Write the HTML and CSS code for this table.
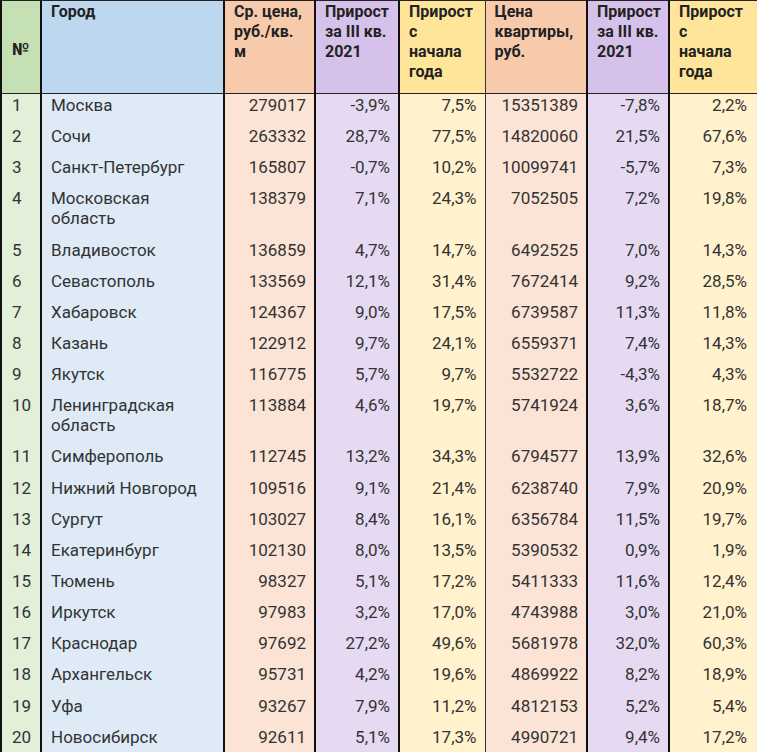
FILE: index.html
```html
<!DOCTYPE html>
<html lang="ru">
<head>
<meta charset="utf-8">
<link rel="stylesheet" href="styles.css">
</head>
<body>
<table class="t">
  <colgroup>
    <col class="c-n"><col class="c-city"><col class="c-p1"><col class="c-g1"><col class="c-y1"><col class="c-p2"><col class="c-g2"><col class="c-y2">
  </colgroup>
  <thead>
    <tr>
      <th class="g num-h">№</th>
      <th class="b">Город</th>
      <th class="o bl">Ср. цена, руб./кв. м</th>
      <th class="v bl">Прирост за III кв. 2021</th>
      <th class="y bl">Прирост<br>с<br>начала<br>года</th>
      <th class="o thin">Цена квартиры, руб.</th>
      <th class="v bl">Прирост за III кв. 2021</th>
      <th class="y bl last">Прирост<br>с<br>начала<br>года</th>
    </tr>
  </thead>
  <tbody id="rows"></tbody>
</table>
<script src="app.js"></script>
</body>
</html>
```

FILE: app.js
```js
const data = [
  [1,"Москва",279017,"-3,9%","7,5%",15351389,"-7,8%","2,2%"],
  [2,"Сочи",263332,"28,7%","77,5%",14820060,"21,5%","67,6%"],
  [3,"Санкт-Петербург",165807,"-0,7%","10,2%",10099741,"-5,7%","7,3%"],
  [4,"Московская область",138379,"7,1%","24,3%",7052505,"7,2%","19,8%"],
  [5,"Владивосток",136859,"4,7%","14,7%",6492525,"7,0%","14,3%"],
  [6,"Севастополь",133569,"12,1%","31,4%",7672414,"9,2%","28,5%"],
  [7,"Хабаровск",124367,"9,0%","17,5%",6739587,"11,3%","11,8%"],
  [8,"Казань",122912,"9,7%","24,1%",6559371,"7,4%","14,3%"],
  [9,"Якутск",116775,"5,7%","9,7%",5532722,"-4,3%","4,3%"],
  [10,"Ленинградская область",113884,"4,6%","19,7%",5741924,"3,6%","18,7%"],
  [11,"Симферополь",112745,"13,2%","34,3%",6794577,"13,9%","32,6%"],
  [12,"Нижний Новгород",109516,"9,1%","21,4%",6238740,"7,9%","20,9%"],
  [13,"Сургут",103027,"8,4%","16,1%",6356784,"11,5%","19,7%"],
  [14,"Екатеринбург",102130,"8,0%","13,5%",5390532,"0,9%","1,9%"],
  [15,"Тюмень",98327,"5,1%","17,2%",5411333,"11,6%","12,4%"],
  [16,"Иркутск",97983,"3,2%","17,0%",4743988,"3,0%","21,0%"],
  [17,"Краснодар",97692,"27,2%","49,6%",5681978,"32,0%","60,3%"],
  [18,"Архангельск",95731,"4,2%","19,6%",4869922,"8,2%","18,9%"],
  [19,"Уфа",93267,"7,9%","11,2%",4812153,"5,2%","5,4%"],
  [20,"Новосибирск",92611,"5,1%","17,3%",4990721,"9,4%","17,2%"]
];
const cls = ["g","b","o bl r","v bl r","y bl r","o thin r","v bl r","y bl r last"];
const tb = document.getElementById("rows");
for (const row of data) {
  const tr = document.createElement("tr");
  row.forEach((v, i) => {
    const td = document.createElement("td");
    td.className = cls[i];
    td.textContent = v;
    tr.appendChild(td);
  });
  tb.appendChild(tr);
}
```

FILE: styles.css
```css
html, body {
  margin: 0;
  padding: 0;
  background: #ffffff;
}
.t {
  border-collapse: collapse;
  table-layout: fixed;
  width: 757px;
  font-family: Roboto, "Liberation Sans", sans-serif;
  font-size: 17px;
  line-height: 20px;
  color: #333;
  border-top: 1px solid #222;
  border-left: 2px solid #111;
}
.c-n { width: 40px; }
.c-city { width: 183px; }
.c-p1 { width: 91px; }
.c-g1 { width: 84px; }
.c-y1 { width: 86px; }
.c-p2 { width: 102px; }
.c-g2 { width: 82px; }
.c-y2 { width: 89px; }

th, td {
  vertical-align: top;
  text-align: left;
  padding: 1px 8px 0 9px;
  white-space: normal;
}
th {
  font-size: 16px;
  font-weight: 700;
  color: #222;
  height: 88px;
  padding-top: 1px;
  border-bottom: 1.5px solid #222;
}
td {
  padding-top: 1px;
  padding-bottom: 10.15px;
}
td.last { padding-right: 11px; }
th.num-h {
  font-size: 17px;
  vertical-align: middle;
  padding-left: 10px;
  padding-top: 4px;
}
td.g { padding-left: 10px; }
th.b, td.b { border-left: 2px solid #111; }
.bl { border-left: 2px solid #111; }
.thin { border-left: 1px solid #333; }
.r { text-align: right; }

th.g { background: #c5e0b3; }
td.g { background: #e2efd9; }
th.b { background: #bdd7ee; }
td.b { background: #deebf7; }
th.o { background: #f7caac; }
td.o { background: #fbe4d5; }
th.v { background: #d6c1ea; }
td.v { background: #e6daf3; }
th.y { background: #ffe599; }
td.y { background: #fff2cc; }
```
